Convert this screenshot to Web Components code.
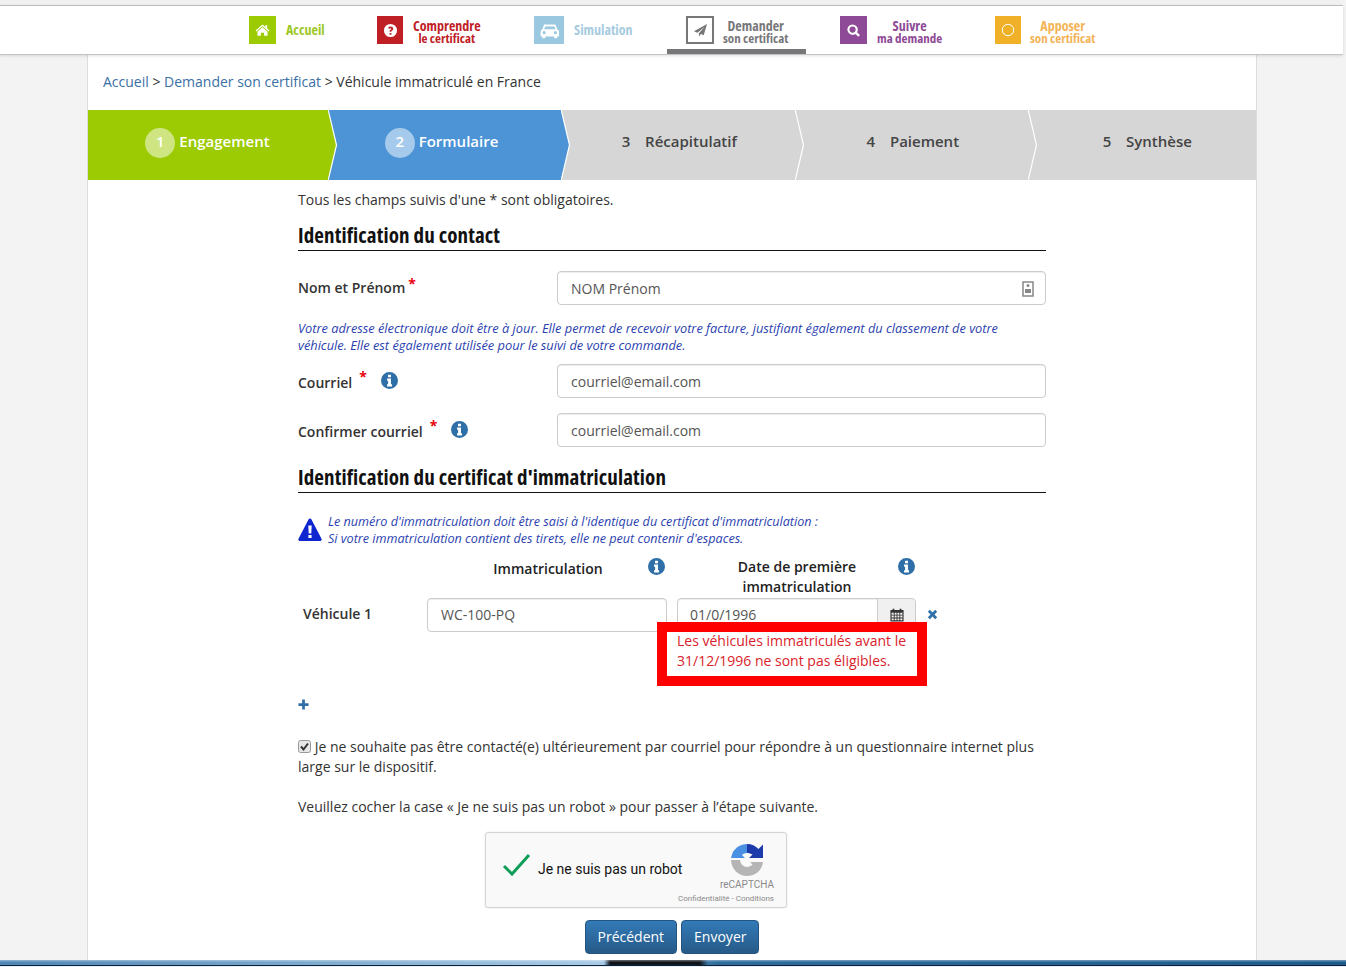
<!DOCTYPE html>
<html lang="fr">
<head>
<meta charset="utf-8">
<title>Demander son certificat</title>
<style>
    html, body {
        margin: 0;
        height: 967px;
        overflow: hidden;
        background: #f3f3f3;
        font-family: "Open Sans", "Liberation Sans", sans-serif;
        font-size: 14px;
        color: #333;
    }
</style>
</head>
<body>
<app-nav>
    <nav-item at="249" icon="home" glyph="15" color="#9ccb04" size="27" gap="10" text="#9cc828"><b>Accueil</b></nav-item>
    <nav-item at="377" icon="question" glyph="15" color="#bf2026" size="26" gap="10"><b>Comprendre</b><i>le certificat</i></nav-item>
    <nav-item at="534" icon="car" glyph="19" color="#9ac8e0" size="30" gap="10" text="#a6cbe0"><b>Simulation</b></nav-item>
    <nav-item at="686" icon="plane" glyph="15" color="#77777a" size="28" gap="9" active><b>Demander</b><i>son certificat</i></nav-item>
    <nav-item at="840" icon="search" glyph="15" color="#8e4a96" size="27" gap="10"><b>Suivre</b><i>ma demande</i></nav-item>
    <nav-item at="995" icon="ring" glyph="16" color="#f0b129" size="26" gap="9" text="#f3b356"><b>Apposer</b><i>son certificat</i></nav-item>
</app-nav>
<page-sheet>
    <bread-crumb></bread-crumb>
    <step-bar>
        <step-item num="1" state="done">Engagement</step-item>
        <step-item num="2" state="current">Formulaire</step-item>
        <step-item num="3">Récapitulatif</step-item>
        <step-item num="4">Paiement</step-item>
        <step-item num="5" last>Synthèse</step-item>
    </step-bar>
    <cert-form></cert-form>
</page-sheet>
<page-foot></page-foot>

<script>
const ICONS = {
    home: '<path fill="#fff" d="M8 1.500 0.600 8l.9 1L8 3.400 14.500 9l.9-1-2.400-2.100V2.400h-2v1.800zM8 4.600 2.600 9.200v4.300h3.700v-3.200h3.400v3.200h3.700V9.200z"/>',
    question: '<path fill="#fff" fill-rule="evenodd" d="M8 1a7 7 0 1 0 0 14A7 7 0 0 0 8 1zm1 11.400H7v-1.800h2zm1.700-5.300c-.3.500-.8.800-1.200 1.100-.4.200-.5.400-.5.800v.4H7V9c0-.9.400-1.400 1-1.700.500-.3.800-.5.800-1 0-.4-.4-.7-.9-.7-.5 0-.9.300-1.200.8L5.500 5.300C6 4.400 6.800 3.800 8 3.800c1.500 0 2.900.9 2.900 2.200 0 .4 0 .8-.2 1.100z"/>',
    car: '<path fill="#fff" fill-rule="evenodd" d="M4 3h8c.7 0 1.200.4 1.400 1l1 3c.8.300 1.600 1 1.600 2v4h-1.500v1.500h-2.500V13H4.500v1.500H2V13H.5V9c0-1 .7-1.700 1.600-2l1-3C3 3.400 3.400 3 4 3zm.3 1.600L3.500 7h9.500l-.8-2.400zM3.500 8.500a1.300 1.300 0 1 0 0 2.600 1.300 1.300 0 0 0 0-2.600zm9.500 0a1.300 1.300 0 1 0 0 2.600 1.300 1.300 0 0 0 0-2.600z"/>',
    search: '<path fill="#fff" fill-rule="evenodd" d="M7 1.500a5.500 5.500 0 1 0 3 10.100l3.100 3.100 1.800-1.800-3.100-3.100A5.500 5.500 0 0 0 7 1.500zm0 2.200a3.300 3.300 0 1 1 0 6.600 3.300 3.300 0 0 1 0-6.600z"/>',
    ring: '<circle cx="8" cy="8" r="5.700" fill="none" stroke="#fff" stroke-width="1"/>',
    plane: '<path fill="#77777a" d="M15 1 1 8.800l3.800 1.500L12.500 4 6.300 11v3.500l2.200-2.700 2.900 1.200z"/>',
    info: '<path fill="currentColor" fill-rule="evenodd" d="M8 0a8 8 0 1 0 0 16A8 8 0 0 0 8 0zM6.600 2.600h2.800v2.300H6.600zM5.700 6.200h3.700v5.400h1v2H5.700v-2h1V8.200h-1z"/>',
    warn: '<path fill="#0f27cf" fill-rule="evenodd" d="M12 .5c.7 0 1.200.4 1.500 1l10 19.200c.6 1.200-.2 2.300-1.500 2.300H2c-1.300 0-2.100-1.100-1.500-2.300l10-19.200c.3-.6.800-1 1.500-1zM10.300 7.500l.4 8h2.600l.4-8zM10.400 17v3h3.200v-3z"/>',
    cal: '<path fill="#333" fill-rule="evenodd" d="M3 .8h2v1.500h6V.8h2v1.500h2.500v13H.5v-13H3zM1.800 5.500v2.200h2.500V5.500zm3.500 0v2.200h2.200V5.500zm3.200 0v2.200h2.200V5.500zm3.200 0v2.200h2.500V5.500zM1.800 8.700v2.200h2.500V8.700zm3.500 0v2.200h2.200V8.700zm3.200 0v2.200h2.200V8.700zm3.200 0v2.200h2.500V8.700zM1.800 11.900v2.200h2.500v-2.200zm3.500 0v2.200h2.200v-2.200zm3.200 0v2.200h2.200v-2.200zm3.200 0v2.200h2.500v-2.200z"/>',
};

const svgIcon = (name, w, h, box = '0 0 16 16') =>
    `<svg viewBox="${box}" width="${w}" height="${h}" aria-hidden="true">${ICONS[name]}</svg>`;

class AppNav extends HTMLElement {
    constructor() {
        super();
        this.attachShadow({ mode: 'open' });
        this.shadowRoot.innerHTML = `
            <style>
                :host {
                    display: block;
                    box-sizing: border-box;
                    height: 55px;
                    margin-right: 3px;
                    padding-top: 5px;
                    background: #f1f1f1;
                    position: relative;
                    z-index: 2;
                }
                .bar {
                    box-sizing: border-box;
                    height: 50px;
                    background: #fff;
                    border-top: 1px solid #bdbdbd;
                    border-bottom: 1px solid #c4c4c4;
                    box-shadow: 0 1px 3px rgba(0,0,0,.12);
                    display: flex;
                }
            </style>
            <div class="bar"><slot></slot></div>
        `;
    }
}
customElements.define('app-nav', AppNav);

class NavItem extends HTMLElement {
    constructor() {
        super();
        this.attachShadow({ mode: 'open' });
    }

    connectedCallback() {
        const icon = this.getAttribute('icon');
        const color = this.getAttribute('color');
        const size = this.getAttribute('size');
        const gap = this.getAttribute('gap');
        const glyph = this.getAttribute('glyph');
        const active = this.hasAttribute('active');
        const text = this.getAttribute('text') || color;
        const single = this.children.length === 1;
        this.shadowRoot.innerHTML = `
            <style>
                :host {
                    position: absolute;
                    left: ${this.getAttribute('at')}px;
                    top: 5px;
                    height: 49px;
                    display: flex;
                    align-items: flex-start;
                }
                .ico {
                    box-sizing: border-box;
                    width: ${size}px;
                    height: 28px;
                    margin-top: 11px;
                    display: flex;
                    align-items: center;
                    justify-content: center;
                    background: ${active ? '#fff' : color};
                    border: ${active ? '2px solid ' + color : '0'};
                }
                .txt {
                    margin-left: ${gap}px;
                    margin-top: ${single ? 18 : 14}px;
                    text-align: center;
                    color: ${text};
                    font-stretch: 75%;
                    font-weight: 700;
                    font-size: 14px;
                    line-height: 13px;
                }
                ::slotted(b) { display: block; font-weight: 700; }
                ::slotted(i) { display: block; font-style: normal; font-weight: 700; font-size: 13px; }
                .under {
                    display: ${active ? 'block' : 'none'};
                    position: absolute;
                    left: -19px;
                    width: 139px;
                    bottom: 0;
                    height: 5px;
                    background: #77777a;
                }
            </style>
            <span class="ico">${svgIcon(icon, glyph, glyph)}</span>
            <span class="txt"><slot></slot></span>
            <span class="under"></span>
        `;
    }
}
customElements.define('nav-item', NavItem);

class PageSheet extends HTMLElement {
    constructor() {
        super();
        this.attachShadow({ mode: 'open' });
        this.shadowRoot.innerHTML = `
            <style>
                :host {
                    display: block;
                    box-sizing: border-box;
                    width: 1170px;
                    height: 905px;
                    margin-left: 87px;
                    background: #fff;
                    border-left: 1px solid #ddd;
                    border-right: 1px solid #ddd;
                    overflow: hidden;
                }
            </style>
            <slot></slot>
        `;
    }
}
customElements.define('page-sheet', PageSheet);

class BreadCrumb extends HTMLElement {
    constructor() {
        super();
        this.attachShadow({ mode: 'open' });
        this.shadowRoot.innerHTML = `
            <style>
                :host {
                    display: block;
                    height: 55px;
                    padding-left: 15px;
                    font-size: 14px;
                    line-height: 53px;
                    color: #333;
                }
                a { color: #3a6fa5; text-decoration: none; }
            </style>
            <a href="#">Accueil</a> &gt; <a href="#">Demander son certificat</a> &gt; Véhicule immatriculé en France
        `;
    }
}
customElements.define('bread-crumb', BreadCrumb);

class StepBar extends HTMLElement {
    constructor() {
        super();
        this.attachShadow({ mode: 'open' });
        this.shadowRoot.innerHTML = `
            <style>
                :host {
                    display: grid;
                    grid-template-columns: 240px 233px 234px 233px 1fr;
                    height: 70px;
                }
            </style>
            <slot></slot>
        `;
    }
}
customElements.define('step-bar', StepBar);

class StepItem extends HTMLElement {
    constructor() {
        super();
        this.attachShadow({ mode: 'open' });
    }

    connectedCallback() {
        const state = this.getAttribute('state');
        const bg = state === 'done' ? '#9ccb04' : state === 'current' ? '#4c94d6' : '#d6d6d6';
        const lit = state === 'done' || state === 'current';
        const last = this.hasAttribute('last');
        const arrow = last ? '' : `
            <svg class="tip" viewBox="0 0 10 70" width="10" height="70" aria-hidden="true">
                <path d="M0 0 L8.500 35 L0 70 Z" fill="${bg}"/>
                <path d="M0 -1 L8.500 35 L0 71" fill="none" stroke="#fff" stroke-width="1.200"/>
            </svg>`;
        this.shadowRoot.innerHTML = `
            <style>
                :host {
                    display: flex;
                    align-items: center;
                    justify-content: center;
                    position: relative;
                    box-sizing: border-box;
                    height: 70px;
                    background: ${bg};
                    color: ${lit ? '#fff' : '#444'};
                    font-size: 15px;
                    font-weight: ${lit ? 600 : 550};
                    padding-bottom: 8px;
                    padding-right: ${state === 'done' ? 1 : state === 'current' ? 6 : last ? 0 : 8}px;
                    z-index: ${6 - Number(this.getAttribute('num'))};
                }
                .num {
                    width: 30px;
                    height: 30px;
                    margin-right: 4px;
                    margin-top: 4px;
                    border-radius: 50%;
                    background: ${lit ? 'rgba(255,255,255,.5)' : 'transparent'};
                    text-align: center;
                    line-height: 26px;
                    font-size: 15px;
                }
                .tip { position: absolute; left: 100%; top: 0; }
            </style>
            <span class="num">${this.getAttribute('num')}</span>
            <span><slot></slot></span>
            ${arrow}
        `;
    }
}
customElements.define('step-item', StepItem);

class FormHeading extends HTMLElement {
    constructor() {
        super();
        this.attachShadow({ mode: 'open' });
        this.shadowRoot.innerHTML = `
            <style>
                :host {
                    display: block;
                    border-bottom: 1px solid #111;
                    color: #111;
                    font-stretch: 75%;
                    font-weight: 700;
                    font-size: 21px;
                    line-height: 26px;
                    letter-spacing: .12px;
                }
            </style>
            <slot></slot>
        `;
    }
}
customElements.define('form-heading', FormHeading);

class InfoIcon extends HTMLElement {
    constructor() {
        super();
        this.attachShadow({ mode: 'open' });
        this.shadowRoot.innerHTML = `
            <style>
                :host { display: inline-block; width: 17px; height: 17px; color: #2f6fa8; line-height: 0; }
            </style>
            ${svgIcon('info', 17, 17)}
        `;
    }
}
customElements.define('info-icon', InfoIcon);

class TextBox extends HTMLElement {
    constructor() {
        super();
        this.attachShadow({ mode: 'open' });
    }

    connectedCallback() {
        const width = this.getAttribute('width');
        this.shadowRoot.innerHTML = `
            <style>
                :host {
                    display: flex;
                    box-sizing: border-box;
                    height: 34px;
                    width: ${width || '489'}px;
                    border: 1px solid #ccc;
                    border-radius: 4px;
                    background: #fff;
                    box-shadow: inset 0 1px 1px rgba(0,0,0,.075);
                    color: #555;
                    font-size: 14px;
                    align-items: center;
                    padding-left: 13px;
                    padding-top: ${width ? 0 : 1}px;
                    line-height: 20px;
                }
                span { flex: 1; }
                .end { flex: none; display: flex; }
            </style>
            <span><slot></slot></span>
            <span class="end"><slot name="end"></slot></span>
        `;
    }
}
customElements.define('text-box', TextBox);

class RecaptchaBox extends HTMLElement {
    constructor() {
        super();
        this.attachShadow({ mode: 'open' });
        this.shadowRoot.innerHTML = `
            <style>
                :host {
                    display: block;
                    position: relative;
                    box-sizing: border-box;
                    width: 302px;
                    height: 76px;
                    margin: 0 auto;
                    background: #f9f9f9;
                    border: 1px solid #d3d3d3;
                    border-radius: 3px;
                    box-shadow: 0 0 3px rgba(0,0,0,.08);
                    font-family: Roboto, "Liberation Sans", sans-serif;
                }
                .check { position: absolute; left: 16px; top: 20px; }
                .label { position: absolute; left: 52px; top: 28px; font-size: 14px; line-height: 17px; color: #111; }
                .logo { position: absolute; left: 245px; top: 11px; }
                .brand { position: absolute; right: 12px; top: 46px; font-size: 10px; line-height: 12px; color: #8a8a8a; }
                .terms { position: absolute; right: 12px; top: 61px; font-size: 8px; line-height: 10px; color: #8a8a8a; }
            </style>
            <svg class="check" viewBox="0 0 30 24" width="30" height="24" aria-hidden="true">
                <path d="M2 13 L10 21 L27 2" fill="none" stroke="#0f9d58" stroke-width="3"/>
            </svg>
            <span class="label">Je ne suis pas un robot</span>
            <svg class="logo" viewBox="0 0 32 32" width="32" height="32" aria-hidden="true">
                <path fill="#4a90e2" d="M16 0C9.500 0 4.200 3.800 1.500 9L0 14H14L11 11C12.200 9.800 14 9 16 9Z"/>
                <path fill="#1c3aa9" d="M16 0C20.500 0 24.600 1.900 27.500 5L32 .5V14H18L21.500 10.500C20 9.600 18 9 16 9Z"/>
                <path fill="#b5b5b5" d="M0 16H9C9.500 20 12.500 23 16 23C18.300 23 20.200 22 21.500 20.500L19 18H32C31 26.500 24.300 32 16 32C7.200 32 .4 25 0 16Z"/>
            </svg>
            <span class="brand">reCAPTCHA</span>
            <span class="terms">Confidentialité - Conditions</span>
        `;
    }
}
customElements.define('recaptcha-box', RecaptchaBox);

class CertForm extends HTMLElement {
    constructor() {
        super();
        this.attachShadow({ mode: 'open' });
        this.shadowRoot.innerHTML = `
            <style>
                :host {
                    display: block;
                    box-sizing: border-box;
                    width: 748px;
                    margin-left: 210px;
                    padding-top: 10px;
                    font-size: 14px;
                    line-height: 20px;
                    color: #333;
                }
                p { margin: 0; }
                form-heading.first { margin-top: 12px; padding-bottom: 2px; }
                form-heading.second { margin-top: 17px; padding-bottom: 2px; }
                .row { display: grid; grid-template-columns: 259px 489px; align-items: start; }
                .row label { font-weight: 600; font-size: 14px; color: #333; display: flex; align-items: flex-start; padding-top: 7px; }
                .row label sup { color: #e8000d; font-size: 14px; font-weight: 700; line-height: 14px; margin-left: 3px; margin-top: -1px; }
                .row label .low { margin-top: 2px; }
                .row label info-icon { margin-top: 1px; }
                .help { font-style: italic; font-size: 12.800px; line-height: 17px; color: #2b3fb0; }
                .warn { display: flex; gap: 6px; margin-top: 20px; font-size: 12.600px; }
                .warn svg { margin-top: 5px; flex: none; }
                .veh-head { position: relative; height: 39px; margin-top: 12px; font-weight: 600; line-height: 20px; color: #222; text-align: center; }
                .veh-row { display: flex; align-items: flex-start; margin-top: 0; position: relative; }
                .veh-row .name { width: 129px; padding-left: 5px; box-sizing: border-box; font-weight: 600; padding-top: 6px; }
                .addon {
                    width: 37px;
                    height: 32px;
                    border-left: 1px solid #ccc;
                    background: #f0f0f0;
                    display: flex;
                    align-items: center;
                    justify-content: center;
                    border-radius: 0 4px 4px 0;
                }
                .h1 { position: absolute; left: 185px; width: 130px; }
                .h2 { position: absolute; left: 424px; width: 150px; top: -2px; }
                .i1 { position: absolute; left: 350px; top: -1px; }
                .i2 { position: absolute; left: 600px; top: -1px; }
                .remove { color: #2f6fa8; margin-left: 11px; margin-top: 11px; line-height: 0; }
                .error {
                    position: absolute;
                    left: 359px;
                    top: 24px;
                    box-sizing: border-box;
                    width: 270px;
                    height: 64px;
                    border: 10px solid #f00;
                    background: #fff;
                    color: #d9222a;
                    font-size: 14px;
                    line-height: 20px;
                    padding-left: 10px;
                    z-index: 2;
                }
                .error div { margin-top: -1px; }
                .plus { margin-top: 67px; line-height: 0; height: 13px; }
                .opt { margin-top: 25px; }
                .opt svg { vertical-align: -1px; }
                .ask { margin-top: 20px; }
                recaptcha-box { margin-top: 15px; margin-left: 187px; }
                .actions { display: flex; justify-content: center; gap: 4px; margin-top: 12px; }
                .btn {
                    box-sizing: border-box;
                    height: 34px;
                    padding: 0 12px;
                    border: 1px solid #245580;
                    border-radius: 4px;
                    background: linear-gradient(#337ab7, #265a88);
                    color: #fff;
                    font: 14px/32px "Open Sans", "Liberation Sans", sans-serif;
                }
            </style>
            <p>Tous les champs suivis d'une * sont obligatoires.</p>
            <form-heading class="first">Identification du contact</form-heading>
            <div class="row" style="margin-top:20px">
                <label>Nom et Prénom<sup style="margin-left:3px">*</sup></label>
                <text-box>NOM Prénom<svg slot="end" viewBox="0 0 12 16" width="12" height="16" style="margin-right:11px" aria-hidden="true"><path fill="none" stroke="#888" stroke-width="1.500" d="M1 1h10v14H1z"/><path fill="#888" d="M6 3a1.500 1.500 0 1 1 0 3 1.500 1.500 0 0 1 0-3zM3 8h6v4H3z"/></svg></text-box>
            </div>
            <p class="help" style="margin-top:15px">Votre adresse électronique doit être à jour. Elle permet de recevoir votre facture, justifiant également du classement de votre<br>véhicule. Elle est également utilisée pour le suivi de votre commande.</p>
            <div class="row" style="margin-top:10px">
                <label><span class="low">Courriel</span><sup style="margin-left:7px">*</sup><info-icon style="margin-left:14px"></info-icon></label>
                <text-box>courriel@email.com</text-box>
            </div>
            <div class="row" style="margin-top:15px">
                <label><span class="low">Confirmer courriel</span><sup style="margin-left:7px">*</sup><info-icon style="margin-left:14px"></info-icon></label>
                <text-box>courriel@email.com</text-box>
            </div>
            <form-heading class="second">Identification du certificat d'immatriculation</form-heading>
            <div class="warn help">
                <svg viewBox="0 0 24 24" width="24" height="24" aria-hidden="true">${ICONS.warn}</svg>
                <span>Le numéro d'immatriculation doit être saisi à l'identique du certificat d'immatriculation :<br>Si votre immatriculation contient des tirets, elle ne peut contenir d'espaces.</span>
            </div>
            <div class="veh-head">
                <span class="h1">Immatriculation</span>
                <info-icon class="i1"></info-icon>
                <span class="h2">Date de première immatriculation</span>
                <info-icon class="i2"></info-icon>
            </div>
            <div class="veh-row">
                <span class="name">Véhicule 1</span>
                <text-box width="240">WC-100-PQ</text-box>
                <text-box width="239" style="margin-left:10px;padding-left:12px">01/0/1996<span class="addon" slot="end">${svgIcon('cal', 14, 14)}</span></text-box>
                <svg class="remove" viewBox="0 0 12 12" width="11" height="11" aria-hidden="true"><path d="M2 2 L10 10 M10 2 L2 10" stroke="#2f6fa8" stroke-width="3" fill="none"/></svg>
                <div class="error"><div>Les véhicules immatriculés avant le 31/12/1996 ne sont pas éligibles.</div></div>
            </div>
            <div class="plus"><svg viewBox="0 0 12 12" width="11" height="11" aria-hidden="true"><path d="M6 .5 V11.500 M.5 6 H11.500" stroke="#2f6fa8" stroke-width="3" fill="none"/></svg></div>
            <p class="opt"><svg viewBox="0 0 13 13" width="13" height="13" role="img" aria-label="coché"><rect x=".5" y=".5" width="12" height="12" rx="2" fill="#e6e6e6" stroke="#9a9a9a"/><path d="M3 6.500 L5.500 9.500 L10 3.500" fill="none" stroke="#333" stroke-width="2"/></svg> Je ne souhaite pas être contacté(e) ultérieurement par courriel pour répondre à un questionnaire internet plus large sur le dispositif.</p>
            <p class="ask">Veuillez cocher la case « Je ne suis pas un robot » pour passer à l’étape suivante.</p>
            <recaptcha-box></recaptcha-box>
            <div class="actions">
                <button class="btn" type="button">Précédent</button>
                <button class="btn" type="button">Envoyer</button>
            </div>
        `;
    }
}
customElements.define('cert-form', CertForm);

class PageFoot extends HTMLElement {
    constructor() {
        super();
        this.attachShadow({ mode: 'open' });
        this.shadowRoot.innerHTML = `
            <style>
                :host {
                    display: block;
                    height: 7px;
                    background:
                        linear-gradient(180deg, rgba(255,255,255,.3) 0 1px, transparent 2px 5px, #0c2238 5px 6px, #e8eef4 6px),
                        linear-gradient(90deg, transparent 0 604px, #10151c 610px 700px, transparent 708px),
                        linear-gradient(90deg, #4f86b5 0, #a9cbe6 600px, #2d6c9c 720px, #1d5b8c 100%);
                }
            </style>
        `;
    }
}
customElements.define('page-foot', PageFoot);
</script>
</body>
</html>
